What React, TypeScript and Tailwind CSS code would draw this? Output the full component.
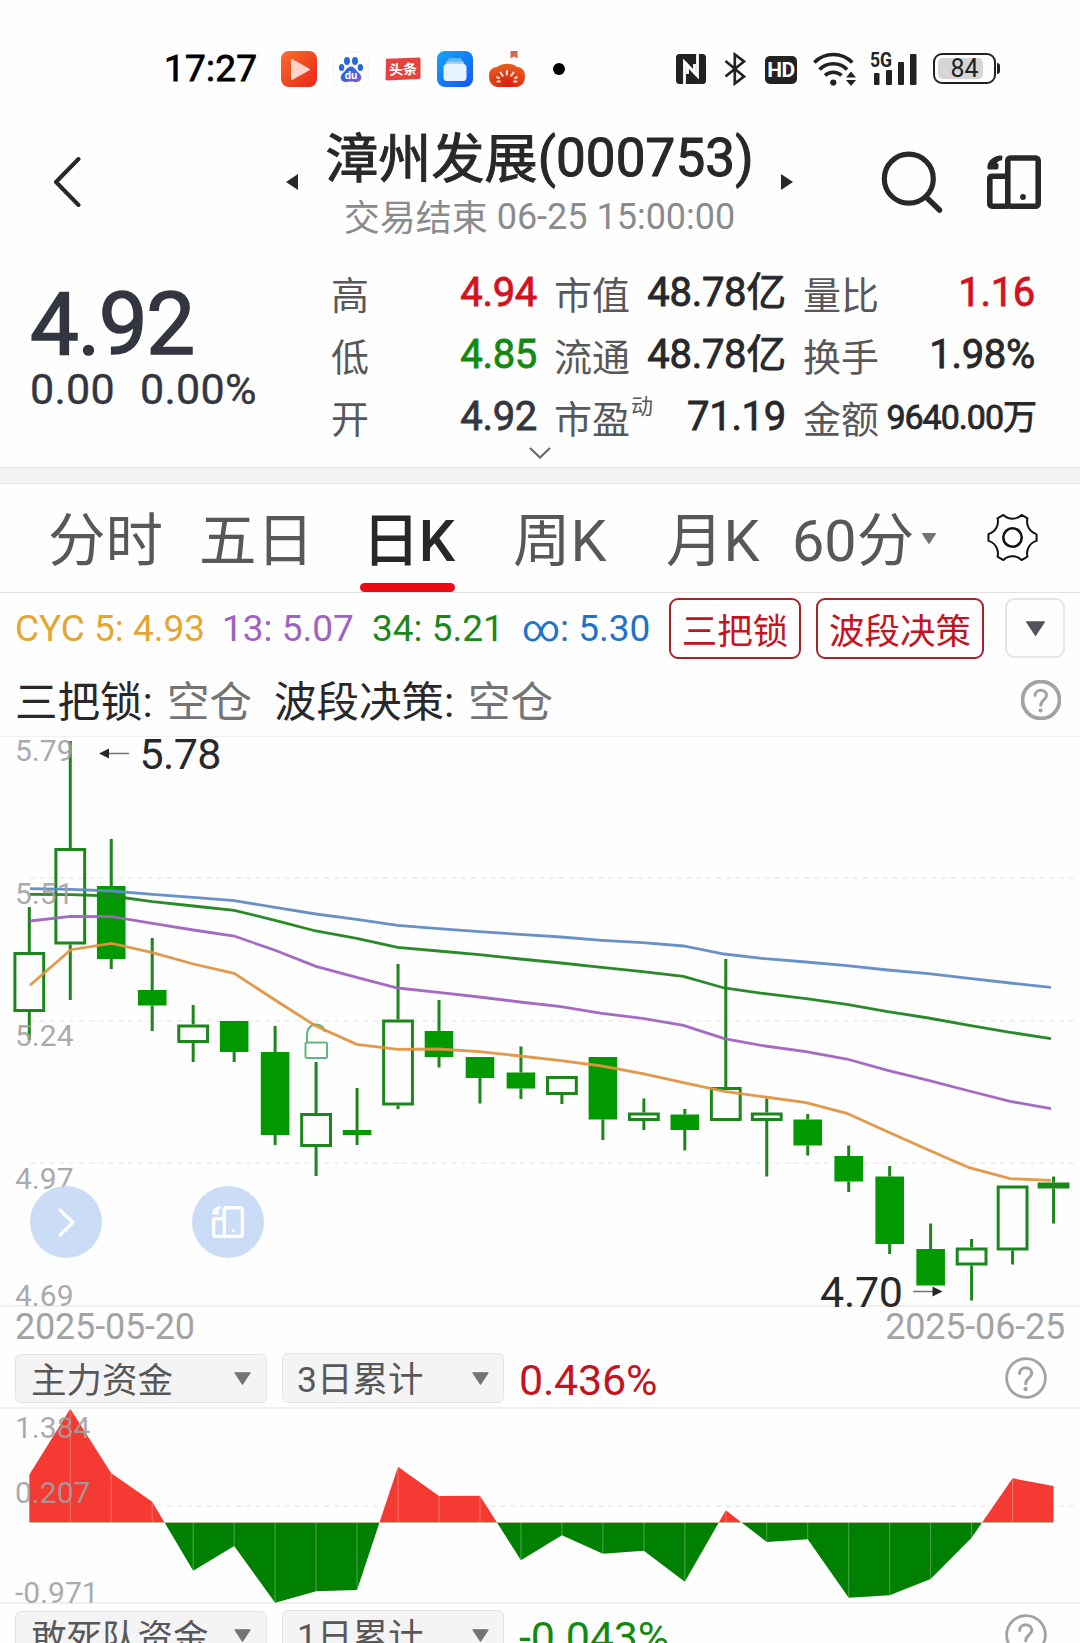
import type { ReactNode } from 'react';
import clsx from 'clsx';

// [top, bottom, high, low, hollow] in chart pixels
type Candle = [number, number, number, number, boolean];

const CANDLES: Candle[] = [
  [952, 1012, 907, 1040, true],
  [848, 944.5, 741, 1000, true],
  [886, 959, 839, 969, false],
  [990, 1005.5, 938, 1031, false],
  [1024.5, 1043, 1005, 1062, true],
  [1021, 1052, 1021, 1062, false],
  [1052, 1135, 1026, 1145, false],
  [1113, 1147, 1062, 1176, true],
  [1130, 1135, 1088, 1145, false],
  [1019.5, 1105.5, 964, 1109, true],
  [1031, 1057, 1000, 1067.5, false],
  [1057, 1078, 1057, 1103.5, false],
  [1072.5, 1088.5, 1046.5, 1099, false],
  [1076, 1095, 1076, 1104, true],
  [1057, 1119.5, 1057, 1140, false],
  [1112.5, 1121, 1098.5, 1130, true],
  [1114.5, 1130, 1109, 1150.5, false],
  [1087, 1121, 959, 1121, true],
  [1112.5, 1121, 1098.5, 1176.5, true],
  [1119.5, 1145.5, 1114, 1155.5, false],
  [1156, 1181.5, 1145.5, 1192, false],
  [1176.5, 1244, 1166, 1254, false],
  [1249, 1285.5, 1223.5, 1285.5, false],
  [1247.5, 1265.5, 1239, 1300.5, true],
  [1185.5, 1250.5, 1185.5, 1264.5, true],
  [1182.5, 1188.5, 1176.5, 1223.5, true],
];

const LINES = [
  {
    color: '#5f8bc4',
    ys: [888.7, 889.3, 891, 894.3, 897.3, 900.7, 907.3, 914, 919.3, 925.3, 928.7, 931.7, 934.3, 937, 940.3, 942.7, 946, 954, 958.7, 962, 965.7, 970, 973.7, 978.3, 983, 987.3],
  },
  {
    color: '#1c851c',
    ys: [894.3, 894.7, 896, 901.7, 906, 910.3, 920.3, 931, 938.3, 947.3, 951, 954.7, 959, 963, 967.3, 971.7, 976.3, 988, 993.7, 998.7, 1004.3, 1011.7, 1018, 1025.3, 1032.3, 1038.7],
  },
  {
    color: '#a062c2',
    ys: [921, 916.3, 916.7, 923.3, 930, 936, 950.3, 966.3, 977.3, 988, 992.3, 997, 1002, 1006.7, 1013.3, 1018.3, 1025.3, 1038.7, 1046, 1051.7, 1059, 1070.3, 1080.3, 1091, 1101.3, 1108.7],
  },
  {
    color: '#e0943f',
    ys: [985.3, 949.7, 943.3, 952.7, 964, 973.3, 1000, 1026, 1044.3, 1049.3, 1049, 1051.7, 1056, 1060.7, 1066, 1073.7, 1082.7, 1091.3, 1097, 1102.7, 1113.3, 1131.7, 1150, 1167.7, 1178.7, 1180.3],
  },
];

const FUND = [1474.7, 1408.7, 1473.3, 1501.7, 1570.7, 1546, 1602.7, 1591.3, 1590, 1466.7, 1496, 1495.7, 1560.3, 1535.3, 1553.7, 1550.7, 1581.7, 1510.3, 1542, 1539.3, 1597.7, 1595.3, 1579, 1537.7, 1478.3, 1486];
const FUND_ZERO = 1522.5;

const STATS = [
  [
    { label: '高', value: '4.94', color: 'text-[#d3111f]' },
    { label: '低', value: '4.85', color: 'text-[#128a12]' },
    { label: '开', value: '4.92', color: 'text-[#333640]' },
  ],
  [
    { label: '市值', value: '48.78亿', color: 'text-[#28282a]' },
    { label: '流通', value: '48.78亿', color: 'text-[#28282a]' },
    { label: '市盈', sup: '动', value: '71.19', color: 'text-[#28282a]' },
  ],
  [
    { label: '量比', value: '1.16', color: 'text-[#d3111f]' },
    { label: '换手', value: '1.98%', color: 'text-[#28282a]' },
    { label: '金额', value: '9640.00万', color: 'text-[#28282a]', small: true },
  ],
];

const candleX = (i: number) => 29.3 + i * 40.97;
const lineX = (i: number) => 30 + i * 40.84;

function PhonesIcon({ className }: { className?: string }) {
  return (
    <svg viewBox="0 0 54 54" className={className} fill="none" stroke="currentColor" strokeWidth="5.6">
      <rect x="20.800" y="3" width="30.400" height="48.200" rx="2.500" />
      <path d="M20.800 51.200H5.300q-2.500 0-2.500-2.500V23.700q0-2.500 2.500-2.500h15.500" />
      <circle cx="36" cy="42" r="2.9" fill="currentColor" stroke="none" />
      <path d="M14 .6C6 1 .6 6 .3 12.4c0 1.2.8 2.1 2 2.1h7.2c1.4 0 2-.8 2-2.2V10c0-1.2-.7-1.9-2-1.9.9-1.500 2.600-2.400 4.500-2.700 1-.2 1.300-.8 1.300-1.600V1.700c0-.8-.4-1.100-1-1.100z" fill="currentColor" stroke="none" />
    </svg>
  );
}

function GearIcon() {
  const points = Array.from({ length: 6 }, (_, k) => {
    const at = (deg: number) => {
      const a = ((k * 60 + deg) * Math.PI) / 180;
      return `${(25.5 + 24.3 * Math.cos(a)).toFixed(2)} ${(25.5 + 24.3 * Math.sin(a)).toFixed(2)}`;
    };
    return `${k === 0 ? 'M' : 'A13 13 0 0 0 '}${at(-8)}L${at(8)}`;
  });
  return (
    <svg viewBox="0 0 51 51" className="w-[51px] h-[51px]" fill="none" stroke="#111" strokeWidth="2" strokeLinejoin="round">
      <path d={`${points.join('')}A13 13 0 0 0 49.56 22.12`} />
      <circle cx="25.5" cy="25.5" r="9.2" strokeWidth="2.6" />
    </svg>
  );
}

function HelpIcon({ size = 'w-[42px] h-[42px]', weight = 2.8 }: { size?: string; weight?: number }) {
  return (
    <svg viewBox="0 0 42 42" className={size} fill="none" stroke="#a3a3a5" strokeWidth={weight}>
      <circle cx="21" cy="21" r="19.4" />
      <path d="M14.6 16.4c.2-3.4 2.7-5.6 6.1-5.6s6.1 2.2 6.1 5.3c0 4.9-6.1 4.8-6.1 10.6" strokeWidth="3" strokeLinecap="round" />
      <circle cx="20.6" cy="32" r="2.2" fill="#a3a3a5" stroke="none" />
    </svg>
  );
}

function Caret({ className = 'w-[17px] h-[13px] text-[#747476]' }: { className?: string }) {
  return (
    <svg viewBox="0 0 16 12" className={className}>
      <path d="M1 .7h14L8 11.3z" fill="currentColor" stroke="currentColor" strokeWidth="1.2" strokeLinejoin="round" />
    </svg>
  );
}

function StatusBar() {
  return (
    <div className="h-[120px] pt-[17px] flex items-center">
      <div className="ml-[164px] w-[117px] text-[37px] tracking-[0.2px] leading-[40px] text-black [-webkit-text-stroke:0.8px]">17:27</div>
      <svg viewBox="0 0 36 36" className="w-9 h-9 shrink-0">
        <defs>
          <linearGradient id="video" x1="0" y1="0" x2="1" y2="1">
            <stop offset="0" stopColor="#f4702f" />
            <stop offset="1" stopColor="#ec2318" />
          </linearGradient>
        </defs>
        <rect width="36" height="36" rx="8" fill="url(#video)" />
        <path d="M11 9l17 9.5L11 28z" fill="#ffd5c8" stroke="#ffd5c8" strokeWidth="2" strokeLinejoin="round" />
      </svg>
      <svg viewBox="0 0 36 36" className="ml-4 w-9 h-9 shrink-0">
        <defs>
          <linearGradient id="paw" x1="0" y1="0" x2="1" y2="1">
            <stop offset="0.3" stopColor="#2868d8" />
            <stop offset="1" stopColor="#8a4fe0" />
          </linearGradient>
        </defs>
        <rect x=".5" y=".5" width="35" height="35" rx="8" fill="#fff" stroke="#f4f4f6" />
        <ellipse cx="14" cy="10" rx="3" ry="4" fill="#2868d8" />
        <ellipse cx="22" cy="10" rx="3" ry="4" fill="#2868d8" />
        <ellipse cx="8.6" cy="16.5" rx="2.7" ry="3.6" fill="#2868d8" />
        <ellipse cx="27.4" cy="16.5" rx="2.7" ry="3.6" fill="#2868d8" />
        <path d="M18 15.5c-3.6 0-5 4-8 6.5-4 3.5-2.5 9 2.5 9 2 0 3.5-.6 5.5-.6s3.5.6 5.5.6c5 0 6.5-5.5 2.5-9-3-2.5-4.4-6.5-8-6.5z" fill="url(#paw)" />
        <text x="18" y="28.3" textAnchor="middle" fontSize="11" fontWeight="700" fill="#fff">du</text>
      </svg>
      <svg viewBox="0 0 36 24" className="ml-4 w-9 h-6 shrink-0 mt-px">
        <path d="M1 1.8L34.5.5q1 0 1 1v19q0 1.3-1.2 1.4L2 23.4q-1.5 0-1.5-1.4z" fill="#e6423f" />
        <text x="18" y="17.5" textAnchor="middle" fontSize="14" fontWeight="700" fill="#fff" transform="rotate(-2 18 12)">头条</text>
      </svg>
      <svg viewBox="0 0 36 36" className="ml-4 w-9 h-9 shrink-0">
        <defs>
          <linearGradient id="files" x1="0" y1="0" x2="1" y2="1">
            <stop offset="0" stopColor="#14a5fb" />
            <stop offset="1" stopColor="#1257f0" />
          </linearGradient>
        </defs>
        <rect width="36" height="36" rx="8" fill="url(#files)" />
        <path d="M12 7h12l1.5 3h-15z" fill="#5db8fb" />
        <path d="M10 10.2h16l1.5 3h-19z" fill="#9fd3fc" />
        <rect x="6.5" y="13" width="23" height="17" rx="3.5" fill="#e6f2ff" />
      </svg>
      <svg viewBox="0 0 36 36" className="ml-4 w-9 h-9 shrink-0">
        <defs>
          <radialGradient id="pumpkin" cx=".5" cy=".9" r=".8">
            <stop offset="0" stopColor="#da1d0d" />
            <stop offset="1" stopColor="#e65a20" />
          </radialGradient>
        </defs>
        <path d="M21.5 0H28.5V7.5L25 5.5 21.5 7.5z" fill="#d9684a" />
        <path d="M8 16c3-2.5 7-3.2 10-3.2s7 .7 10 3.2c6.5.5 8 5 8 9 0 7-4 11-9 11H9c-5 0-9-4-9-11 0-4 1.5-8.5 8-9z" fill="url(#pumpkin)" />
        <path d="M17.9 20v3.5M11.5 21.5l2.2 3.2M24.500 21.500l-2.300 3.200M8 26.200l2 .8M28 26.200l-2 .8M8.500 30.500h2.500M27.500 30.500h-2.500" stroke="#ffe3d4" strokeWidth="2" strokeLinecap="round" />
      </svg>
      <div className="ml-7 w-3 h-3 rounded-full bg-black" />

      {/* System indicators */}
      <svg viewBox="0 0 30 30" className="ml-[111px] w-[30px] h-[30px] shrink-0">
        <rect width="30" height="30" rx="3.5" fill="#222" />
        <path d="M8.5 30V8l10 11V10M21.5 0v22l-10-11v9" fill="none" stroke="#fff" strokeWidth="2.8" />
      </svg>
      <svg viewBox="0 0 22 34" className="ml-[18px] w-[22px] h-[34px] shrink-0" fill="none" stroke="#222" strokeWidth="2.7">
        <path d="M1.5 9L20 24.5l-9.2 7V2.5L20 9.5 1.5 24.5" />
      </svg>
      <div className="ml-[19px] w-8 h-7 mt-[3px] rounded-[5px] bg-[#222] text-white text-[21px] font-bold leading-7 text-center tracking-tight">HD</div>
      <svg viewBox="0 0 44 34" className="ml-4 w-11 h-[34px] shrink-0" fill="none" stroke="#222" strokeWidth="3.6">
        <path d="M1.3 10.5a26.5 26.5 0 0 1 38 0" />
        <path d="M6.5 17.5a19.5 19.5 0 0 1 27.6 0" />
        <path d="M12 23.5a12 12 0 0 1 16.5 0" />
        <circle cx="20.3" cy="30.5" r="3.1" fill="#222" stroke="none" />
        <path d="M33 25.5l5-6 5 6zM33 28l5 6 5-6z" fill="#222" stroke="none" />
      </svg>
      <svg viewBox="0 0 47 33" className="ml-[13px] w-[47px] h-[33px] shrink-0 -mt-px" fill="#222">
        <text x="0" y="15" fontSize="20" fontWeight="700" textLength="22" lengthAdjust="spacingAndGlyphs">5G</text>
        <rect x="4" y="21" width="5.5" height="12" rx="1" />
        <rect x="16" y="18" width="6" height="15" rx="1" />
        <rect x="28" y="10" width="6" height="23" rx="1" />
        <rect x="40" y="2" width="6.5" height="31" rx="1" />
      </svg>
      <div className="ml-4 relative w-[63px] h-[31px] rounded-[9px] border-2 border-[#222] p-[3px]">
        <div className="w-[45px] h-[21px] rounded-[5px] bg-[#d5d5d5]" />
        <div className="absolute inset-0 text-[25px] leading-[28px] text-center text-[#222]">84</div>
      </div>
      <div className="ml-px w-[3px] h-[11px] rounded-r bg-[#222]" />
    </div>
  );
}

function Header() {
  return (
    <div className="h-[130px] flex items-start text-[#28282a]">
      <svg viewBox="0 0 28 52" className="ml-[53px] mt-[36px] w-7 h-[52px] shrink-0" fill="none" stroke="#28282a" strokeWidth="4" strokeLinecap="round" strokeLinejoin="round">
        <path d="M25.5 3L3 26l22.5 23" />
      </svg>
      <svg viewBox="0 0 12 16" className="ml-[205px] mt-[54px] w-3 h-4 shrink-0">
        <path d="M12 0v16L0 8z" fill="#28282a" />
      </svg>
      <div className="w-[483px] pt-[8px] text-center whitespace-nowrap shrink-0">
        <div className="text-[53px] leading-[60px] tracking-[0.1px] [-webkit-text-stroke:1px]">
          <span className="relative top-[1.5px]">漳州发展</span>(000753)
        </div>
        <div className="mt-[7px] text-[36px] leading-[44px] text-[#8a8b8f]">
          <span className="relative top-[1.5px]">交易结束</span> 06-25 15:00:00
        </div>
      </div>
      <svg viewBox="0 0 12 16" className="mt-[54px] w-3 h-4 shrink-0">
        <path d="M0 0v16l12-8z" fill="#28282a" />
      </svg>
      <svg viewBox="0 0 62 62" className="ml-[88px] mt-[31px] w-[62px] h-[62px] shrink-0" fill="none" stroke="#28282a">
        <circle cx="27.8" cy="27.7" r="24.5" strokeWidth="5.2" />
        <path d="M45 46l13.5 13" strokeWidth="5.5" strokeLinecap="round" />
      </svg>
      <PhonesIcon className="ml-[44px] mt-[35px] w-[54px] h-[54px] shrink-0" />
    </div>
  );
}

function Quote() {
  return (
    <div className="relative h-[217px] flex items-start whitespace-nowrap">
      <div className="w-[331px] pl-[30px] pt-[29px] text-[#333640]">
        <div className="text-[87px] leading-[90px] tracking-[-1.5px] [-webkit-text-stroke:1.6px]">4.92</div>
        <div className="text-[43px] leading-[42px] -mt-px flex tracking-[0.3px] [-webkit-text-stroke:0.4px]">
          <span className="w-[110px]">0.00</span>
          <span>0.00%</span>
        </div>
      </div>
      <div className="pt-[12px] flex gap-[17px]">
        {STATS.map((col, i) => (
          <div key={i} className={clsx(i === 0 ? 'w-[206px]' : 'w-[232px]')}>
            {col.map((s) => (
              <div key={s.label} className="h-[62px] flex justify-between">
                <div className="relative pt-[3px] text-[38px] leading-[62px] text-[#58585a]">
                  {s.label}
                  {'sup' in s && <span className="absolute left-[77px] -top-[10px] text-[22px]">{s.sup}</span>}
                </div>
                <div
                  className={clsx(
                    'leading-[62px] [-webkit-text-stroke:0.8px]',
                    'small' in s ? 'text-[34px] tracking-[-1px] -mr-px' : 'text-[40px] tracking-[-0.3px]',
                    s.color
                  )}
                >
                  {s.value}
                </div>
              </div>
            ))}
          </div>
        ))}
      </div>
      <svg viewBox="0 0 22 12" className="absolute left-[529px] top-[197px] w-[22px] h-3" fill="none" stroke="#6b6b6d" strokeWidth="2.2">
        <path d="M1 1l10 9.5L21 1" />
      </svg>
    </div>
  );
}

function Tabs() {
  return (
    <div className="h-[109px] flex items-start border-b border-[#e2e2e2] text-[57.5px] leading-[116px] text-[#58585a] whitespace-nowrap">
      <div className="ml-[48px] w-[151px]">分时</div>
      <div className="w-[161px]">五日</div>
      <div className="relative w-[95px] h-[108px] pr-px text-right font-[550] text-[#28282a] tracking-[-1px]">
        日K
        <div className="absolute left-0 bottom-0 w-full h-[9px] rounded-full bg-[#ee0a14]" />
      </div>
      <div className="ml-[58px] w-[153px]">周K</div>
      <div className="w-[126px]">月K</div>
      <div className="w-[125px]">60分</div>
      <Caret className="ml-[4px] mt-[49px] w-[16px] h-[11px] shrink-0 text-[#747476]" />
      <div className="ml-[50px] mt-[28px]">
        <GearIcon />
      </div>
    </div>
  );
}

function Indicators() {
  return (
    <div className="h-[144px] whitespace-nowrap border-b border-[#f0f0f0]">
      <div className="h-[70px] pt-[5px] flex text-[37px] leading-[62px]">
        <span className="ml-[15px] w-[207px] text-[#e5a532]">CYC 5: 4.93</span>
        <span className="w-[150px] text-[#a062c2]">13: 5.07</span>
        <span className="w-[150px] text-[#1c851c]">34: 5.21</span>
        <span className="w-[147px] text-[#2272c8]">∞: 5.30</span>
        <button className="w-[132px] h-[61px] pt-[3px] rounded-[9px] border-2 border-[#a8202b] text-[#c4141f] text-[35.5px] leading-[58px]">三把锁</button>
        <button className="ml-[15px] w-[168px] h-[61px] pt-[3px] rounded-[9px] border-2 border-[#a8202b] text-[#c4141f] text-[35.5px] leading-[58px]">波段决策</button>
        <button className="ml-[21px] w-[60px] h-[60px] rounded-[9px] border-2 border-[#e5e5e5] flex items-center justify-center">
          <Caret className="w-[21px] h-[15px] text-[#53545b]" />
        </button>
      </div>
      <div className="h-[73px] flex text-[42.5px] leading-[80px] text-[#28282a]">
        <div className="ml-[15px] w-[152px]">三把锁:</div>
        <div className="w-[107px] text-[#747476]">空仓</div>
        <div className="w-[194px]">波段决策:</div>
        <div className="w-[553px] text-[#747476]">空仓</div>
        <div className="mt-[17px]">
          <HelpIcon size="w-10 h-10" weight={4} />
        </div>
      </div>
    </div>
  );
}

function AxisLabel({ y, children }: { y: number; children: ReactNode }) {
  return (
    <text x="15" y={y} fontSize="30" fill="#a0a0a2" fillOpacity="0.9">
      {children}
    </text>
  );
}

function PriceChart() {
  return (
    <div className="relative h-[570px]">
      <svg viewBox="0 737 1080 570" className="block w-[1080px] h-[570px] overflow-visible">
        {[878, 1021, 1163].map((y) => (
          <path key={y} d={`M30 ${y}H1075`} stroke="#f0f0f0" strokeWidth="2" strokeDasharray="5 4.8" />
        ))}
        <path d="M0 1306H1080" stroke="#efefef" strokeWidth="2" />
        {CANDLES.map(([top, bottom, high, low, hollow], i) => {
          const x = candleX(i);
          return (
            <g key={i} stroke="#1c851c" strokeWidth="3">
              <path d={`M${x} ${high}V${top}M${x} ${bottom}V${low}`} />
              {hollow ? (
                <rect x={x - 14.4} y={top + 1.5} width="28.8" height={bottom - top - 3} fill="none" />
              ) : (
                <rect x={x - 14.3} y={top} width="28.6" height={bottom - top} fill="#009a00" stroke="none" />
              )}
            </g>
          );
        })}
        <path d="M307 1042v-7c0-14 17-13 18-3" stroke="#62b57d" strokeWidth="2" fill="none" />
        <rect x="305.5" y="1042.5" width="21.5" height="15.5" rx="1.5" stroke="#62b57d" strokeWidth="2" fill="none" />
        {LINES.map((l) => (
          <polyline
            key={l.color}
            points={l.ys.map((y, i) => `${lineX(i)},${y}`).join(' ')}
            fill="none"
            stroke={l.color}
            strokeWidth="2.8"
            strokeOpacity="0.95"
          />
        ))}
        <AxisLabel y={761}>5.79</AxisLabel>
        <AxisLabel y={903.5}>5.51</AxisLabel>
        <AxisLabel y={1045.5}>5.24</AxisLabel>
        <AxisLabel y={1189}>4.97</AxisLabel>
        <AxisLabel y={1305.5}>4.69</AxisLabel>
        <g fill="#28282a" fontSize="43">
          <path d="M109 753.5H129" stroke="#747476" strokeWidth="1.5" />
          <path d="M99 753.5l10-5v10z" />
          <text x="139.5" y="769" textLength="82">5.78</text>
          <path d="M913 1291.5H933" stroke="#747476" strokeWidth="1.5" />
          <path d="M942.5 1291.5l-10-5v10z" />
          <text x="820" y="1306.5" textLength="83">4.70</text>
        </g>
      </svg>

      {/* Floating buttons */}
      <div className="absolute left-[30px] top-[449px] w-[72px] h-[72px] rounded-full bg-[#c8daf5]/95 flex items-center justify-center">
        <svg viewBox="0 0 17 29" className="w-[17px] h-[29px]" fill="none" stroke="#fff" strokeWidth="3.2" strokeLinecap="round" strokeLinejoin="round">
          <path d="M2 2l13 12.5L2 27" />
        </svg>
      </div>
      <div className="absolute left-[192px] top-[449px] w-[72px] h-[72px] rounded-full bg-[#c8daf5]/95 flex items-center justify-center text-white">
        <PhonesIcon className="w-8 h-8" />
      </div>
    </div>
  );
}

function FundHeader({ name, period, value, color }: { name: string; period: string; value: string; color: string }) {
  return (
    <div className="h-[60px] flex text-[35.5px] text-[#58585a] whitespace-nowrap">
      <div className="ml-[15px] mt-[7px] w-[252px] h-[49px] rounded-md bg-[#f4f4f4] border border-[#e4e4e4] flex items-center justify-between px-[15px]">
        <span className="leading-[48px] mt-[5px]">{name}</span>
        <Caret />
      </div>
      <div className="ml-[15px] mt-[6px] w-[222px] h-[50px] rounded-md bg-[#f4f4f4] border border-[#e4e4e4] flex items-center justify-between pl-[14px] pr-[14px]">
        <span className="leading-[48px] mt-[4px]">{period}</span>
        <Caret />
      </div>
      <div className={clsx('ml-[15px] w-[486px] pt-[6px] text-[43px] leading-[54px] tracking-[-0.2px]', color)}>{value}</div>
      <div className="mt-[10px]">
        <HelpIcon />
      </div>
    </div>
  );
}

function FundChart() {
  const area = `M${candleX(0)} ${FUND_ZERO}${FUND.map((y, i) => `L${candleX(i)} ${y}`).join('')}V${FUND_ZERO}z`;
  return (
    <svg viewBox="0 1407 1080 197" className="block w-[1080px] h-[197px] overflow-visible">
      <defs>
        <clipPath id="inflow">
          <rect x="0" y="1407" width="1080" height={FUND_ZERO - 1407} />
        </clipPath>
        <clipPath id="outflow">
          <rect x="0" y={FUND_ZERO} width="1080" height="82" />
        </clipPath>
      </defs>
      <path d="M0 1408H1080M0 1603H1080" stroke="#efefef" strokeWidth="2" />
      <path d="M30 1506H1075" stroke="#f0f0f0" strokeWidth="2" strokeDasharray="5 4.8" />
      <path d={area} fill="#f43a32" clipPath="url(#inflow)" />
      <path d={area} fill="#008000" clipPath="url(#outflow)" />
      {FUND.slice(1, -1).map((y, i) => (
        <path key={i} d={`M${candleX(i + 1)} ${FUND_ZERO}V${y}`} stroke="#fff" strokeOpacity="0.3" strokeWidth="1" />
      ))}
      <AxisLabel y={1438}>1.384</AxisLabel>
      <AxisLabel y={1502.5}>0.207</AxisLabel>
      <AxisLabel y={1602.5}>-0.971</AxisLabel>
    </svg>
  );
}

export default function App() {
  return (
    <div className="w-[1080px] h-[1643px] overflow-hidden bg-[#fefefe] font-[Roboto,'Noto_Sans_CJK_SC',sans-serif]">
      <StatusBar />
      <Header />
      <Quote />
      <div className="h-[17px] bg-[#f4f4f4] border-y border-[#e2e2e2]" />
      <Tabs />
      <Indicators />
      <PriceChart />
      <div className="h-[40px] px-[15px] flex justify-between text-[36px] leading-[40px] tracking-[-0.2px] text-[#a3a3a5]">
        <span>2025-05-20</span>
        <span>2025-06-25</span>
      </div>
      <FundHeader name="主力资金" period="3日累计" value="0.436%" color="text-[#c4141f]" />
      <FundChart />
      <FundHeader name="敢死队资金" period="1日累计" value="-0.043%" color="text-[#128a12]" />
    </div>
  );
}
